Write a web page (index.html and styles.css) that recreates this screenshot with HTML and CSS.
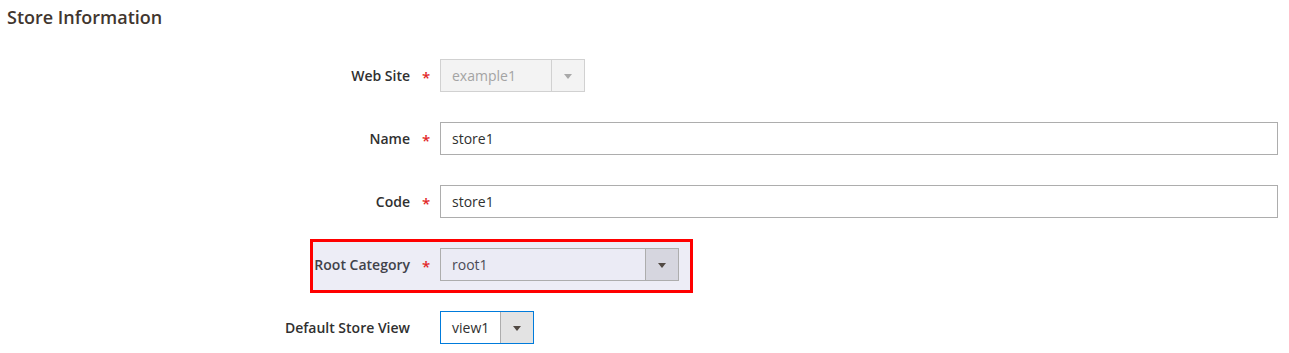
FILE: index.html
```html
<!DOCTYPE html>
<html lang="en">
<head>
    <meta charset="UTF-8">
    <title>Store Information</title>
    <link rel="stylesheet" href="styles.css">
</head>
<body>

    <div class="fieldset">
        <div class="legend">Store Information</div>

        <div class="rows">
            <!-- Web Site -->
            <div class="field">
                <label class="label">Web Site</label>
                <span class="req">*</span>
                <div class="select disabled web-site">
                    <span class="value">example1</span>
                    <span class="arrow"></span>
                </div>
            </div>

            <!-- Name -->
            <div class="field">
                <label class="label">Name</label>
                <span class="req">*</span>
                <div class="input">store1</div>
            </div>

            <!-- Code -->
            <div class="field">
                <label class="label">Code</label>
                <span class="req">*</span>
                <div class="input">store1</div>
            </div>

            <!-- Root Category (highlighted) -->
            <div class="field highlight">
                <label class="label">Root Category</label>
                <span class="req">*</span>
                <div class="select root-cat">
                    <span class="value">root1</span>
                    <span class="arrow"></span>
                </div>
            </div>

            <!-- Default Store View -->
            <div class="field">
                <label class="label">Default Store View</label>
                <span class="req"></span>
                <div class="select focus store-view">
                    <span class="value">view1</span>
                    <span class="arrow"></span>
                </div>
            </div>
        </div>
    </div>

</body>
</html>
```

FILE: styles.css
```css
body {
    margin: 0;
    padding: 0;
    font-family: 'Open Sans', 'Noto Sans', sans-serif;
    background-color: #fff;
    color: #303030;
    overflow: hidden;
}

.fieldset {
    padding: 4px 11px 0 7px;
}

.legend {
    font-size: 18px;
    font-weight: 600;
    color: #41362f;
    line-height: 26px;
}

.rows {
    display: flex;
    flex-direction: column;
    gap: 30px;
    padding-top: 29px;
}

/* Each row: label | asterisk | control */
.field {
    display: grid;
    grid-template-columns: 403px 30px 1fr;
    align-items: center;
    height: 33px;
    position: relative;
    z-index: 0;
}

.label {
    text-align: right;
    font-size: 14px;
    font-weight: 600;
    color: #303030;
}

.req {
    color: #e22626;
    font-size: 15px;
    font-weight: 600;
    text-align: center;
    padding-left: 2px;
    padding-top: 3px;
}

.input,
.select {
    box-sizing: border-box;
    height: 33px;
    border: 1px solid #adadad;
    font-size: 14px;
    line-height: 31px;
    color: #303030;
    background: #fff;
}

.input {
    padding-left: 11px;
}

.select {
    display: flex;
}

.select .value {
    flex-grow: 1;
    padding-left: 11px;
}

.select .arrow {
    width: 32px;
    border-left: 1px solid #adadad;
    background-color: #e3e3e3;
    position: relative;
}

.select .arrow::after {
    content: '';
    position: absolute;
    left: 50%;
    top: 50%;
    margin: -2px 0 0 -4px;
    border-left: 4px solid transparent;
    border-right: 4px solid transparent;
    border-top: 5px solid #514943;
}

.web-site { width: 145px; }
.root-cat { width: 239px; }
.store-view { width: 94px; }

.select.disabled {
    background-color: #f3f3f3;
    border-color: #d1d1d1;
    color: #a4a4a4;
}

.select.disabled .arrow {
    background-color: #f3f3f3;
    border-left-color: #d1d1d1;
}

.select.disabled .arrow::after {
    border-top-color: #a9a9a9;
}

.select.focus {
    border-color: #007bdb;
}

/* Highlighted row */
.highlight::before {
    content: '';
    position: absolute;
    left: 303px;
    top: -9px;
    width: 377px;
    height: 48px;
    border: 3px solid #f00;
    background-color: #ededf6;
    z-index: -1;
}

.highlight .label {
    color: #41424a;
}

.root-cat {
    background-color: #ebebf5;
    color: #4a4a55;
}

.root-cat .arrow {
    background-color: #d6d6df;
}
```
